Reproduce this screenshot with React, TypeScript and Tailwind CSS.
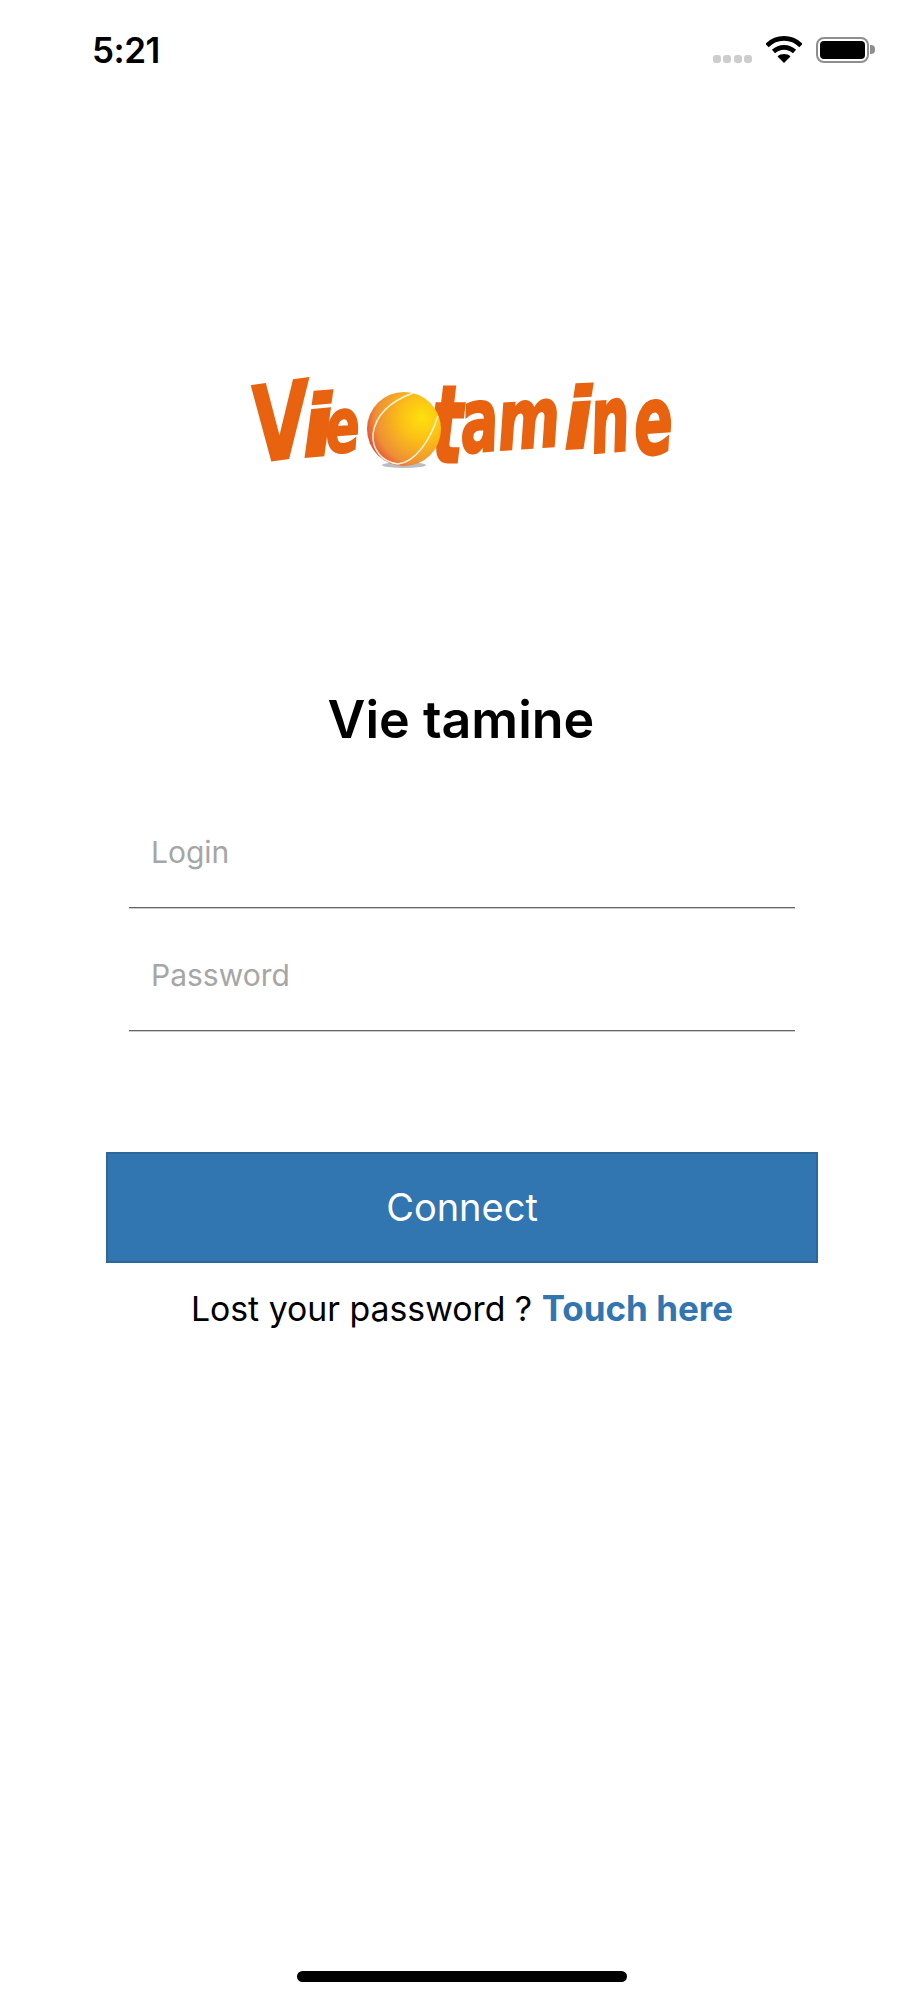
const LETTERS = [
  { ch: 'V', x: 15, y: 92, sx: 1.32, sy: 1.85, rot: -8 },
  { ch: 'i', x: 61, y: 87, sx: 1.75, sy: 1.5, rot: -5 },
  { ch: 'e', x: 85, y: 83, sx: 0.9, sy: 1.35, rot: -4 },
  { ch: 't', x: 190, y: 92, sx: 1.15, sy: 1.9, rot: 0 },
  { ch: 'a', x: 221, y: 83, sx: 1.0, sy: 1.6, rot: -5 },
  { ch: 'm', x: 257, y: 80, sx: 1.08, sy: 1.5, rot: -4 },
  { ch: 'i', x: 322, y: 79, sx: 1.6, sy: 1.5, rot: -3 },
  { ch: 'n', x: 351, y: 83, sx: 0.98, sy: 1.65, rot: -5 },
  { ch: 'e', x: 394, y: 85, sx: 1.02, sy: 1.7, rot: -4 },
]

function Logo() {
  return (
    <svg width="440" height="110" viewBox="0 0 440 110">
      <defs>
        <radialGradient id="ball" cx="0.75" cy="0.35" r="0.85">
          <stop offset="0" stopColor="#fde10d" />
          <stop offset="0.35" stopColor="#fcc015" />
          <stop offset="0.75" stopColor="#ee8f35" />
          <stop offset="1" stopColor="#e2383a" />
        </radialGradient>
      </defs>
      <ellipse cx="162" cy="95" rx="22" ry="3" fill="#8d8f9c" opacity="0.6" />
      {LETTERS.map((l, i) => (
        <text
          key={i}
          transform={`translate(${l.x} ${l.y}) rotate(${l.rot}) scale(${l.sx} ${l.sy})`}
          fontFamily="'DejaVu Sans', sans-serif"
          fontWeight="700"
          fontStyle="italic"
          fontSize="56"
          fill="#e8620f"
          stroke="#e8620f"
          strokeWidth="1.5"
        >
          {l.ch}
        </text>
      ))}
      <circle cx="162" cy="59" r="37" fill="url(#ball)" />
      <path d="M171 23C152 30 134 42 131 64C130 80 140 92 156 94C174 92 188 70 196 46" fill="none" stroke="#fff3dc" strokeWidth="1.5" />
    </svg>
  )
}

function Field({ placeholder, type = 'text' }: { placeholder: string; type?: string }) {
  return (
    <input
      type={type}
      placeholder={placeholder}
      className="w-[666px] h-[78px] border-b border-b-[#666666] shadow-[0_1px_0_#cccccc] pl-[22px] pb-[34px] text-[30px] text-black outline-none placeholder:text-[#a6a6a6]"
    />
  )
}

export default function App() {
  return (
    <div className="w-[924px] h-[2000px] bg-white flex flex-col items-center font-['Inter',sans-serif] text-black overflow-hidden">
      <div className="w-full h-[100px] flex items-start justify-between pl-[92px] pr-[49px]">
        <span className="mt-[29px] text-[35px] leading-[42px] font-semibold tracking-[-0.5px]">5:21</span>
        <div className="flex items-center mt-[36px]">
          <div className="flex gap-[2.5px] mt-[19px] mr-[14px]">
            <span className="w-[8px] h-[8px] rounded-[3px] bg-[#cdcdcd]" />
            <span className="w-[8px] h-[8px] rounded-[3px] bg-[#cdcdcd]" />
            <span className="w-[8px] h-[8px] rounded-[3px] bg-[#cdcdcd]" />
            <span className="w-[8px] h-[8px] rounded-[3px] bg-[#cdcdcd]" />
          </div>
          <svg width="36" height="27" viewBox="0 0 36 27" className="mr-[14px]">
            <path d="M1 9.5C10.5 0 25.5 0 35 9.5" fill="none" stroke="#000" strokeWidth="4.6" />
            <path d="M7.5 15.5C13.5 10 22.5 10 28.5 15.5" fill="none" stroke="#000" strokeWidth="4.6" />
            <path d="M11.5 20.5C15 17.3 21 17.3 24.5 20.5L18 27Z" fill="#000" />
          </svg>
          <div className="w-[53px] h-[26px] rounded-[8px] border-[2px] border-[#8e8e8e] p-[2px] flex">
            <div className="flex-1 rounded-[4px] bg-black" />
          </div>
          <div className="w-[5px] h-[9px] ml-[1px] rounded-r-[4px] bg-[#8e8e8e]" />
        </div>
      </div>

      <div className="mt-[270px]">
        <Logo />
      </div>

      <h1 className="mt-[210px] -ml-[2px] text-[52px] leading-[60px] font-semibold">Vie tamine</h1>

      <div className="mt-[80px] flex flex-col gap-[45px]">
        <Field placeholder="Login" />
        <Field placeholder="Password" type="password" />
      </div>

      <button className="mt-[121px] w-[712px] h-[111px] bg-[#3276b1] border-[2px] border-[#2c669b] text-white text-[38px]">
        Connect
      </button>

      <p className="mt-[24px] text-[33.8px] leading-[42px]">
        Lost your password ? <span className="text-[35px] font-bold text-[#3276b1]">Touch here</span>
      </p>

      <div className="mt-auto mb-[18px] w-[330px] h-[11px] rounded-full bg-black" />
    </div>
  )
}
